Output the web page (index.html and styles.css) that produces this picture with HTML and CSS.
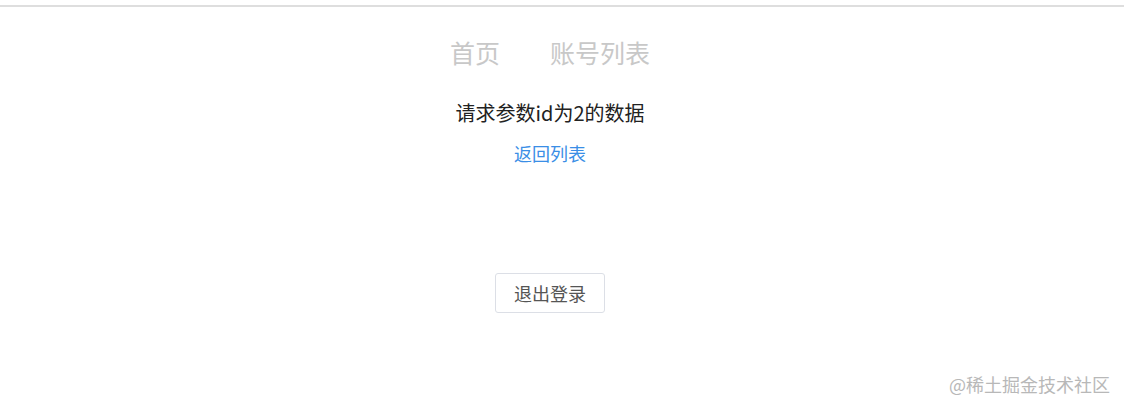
FILE: index.html
```html
<!DOCTYPE html>
<html lang="zh-CN">
<head>
    <meta charset="UTF-8">
    <meta name="viewport" content="width=device-width, initial-scale=1.0">
    <title>账号详情</title>
    <link rel="stylesheet" href="styles.css">
</head>
<body>
    <div class="page">
        <div class="container">
            <!-- 顶部导航 -->
            <nav class="nav">
                <a class="nav-item" href="#">首页</a>
                <a class="nav-item" href="#">账号列表</a>
            </nav>

            <!-- 详情内容 -->
            <div class="detail">
                <p class="detail-text">请求参数id为2的数据</p>
                <a class="back-link" href="#">返回列表</a>
            </div>

            <button class="logout-btn">退出登录</button>
        </div>
    </div>

    <div class="watermark">@稀土掘金技术社区</div>
</body>
</html>
```

FILE: styles.css
```css
* {
    box-sizing: border-box;
    margin: 0;
    padding: 0;
}

body {
    font-family: "Noto Sans CJK SC", "Noto Sans", sans-serif;
    background: #fff;
    color: #303133;
    min-height: 100vh;
}

.page {
    margin-top: 5px;
    border-top: 2px solid #dedede;
}

.container {
    width: 1100px;
    display: flex;
    flex-direction: column;
    align-items: center;
}

/* 导航 */
.nav {
    display: flex;
    gap: 50px;
    padding-top: 28px;
}

.nav-item {
    font-size: 25px;
    line-height: 34px;
    color: #c8c8c8;
    text-decoration: none;
}

/* 内容 */
.detail {
    display: flex;
    flex-direction: column;
    align-items: center;
    margin-top: 30px;
}

.detail-text {
    font-size: 20px;
    line-height: 28px;
    color: #222;
}

.back-link {
    margin-top: 13px;
    font-size: 18px;
    line-height: 26px;
    color: #3a8ee6;
    text-decoration: none;
}

.logout-btn {
    margin-top: 107px;
    width: 110px;
    height: 40px;
    font-family: inherit;
    font-size: 18px;
    color: #555;
    background: #fff;
    border: 1px solid #dcdfe6;
    border-radius: 3px;
    cursor: pointer;
}

.watermark {
    position: absolute;
    right: 14px;
    bottom: 12px;
    font-size: 18px;
    line-height: 24px;
    color: #b8b8b8;
}
```
